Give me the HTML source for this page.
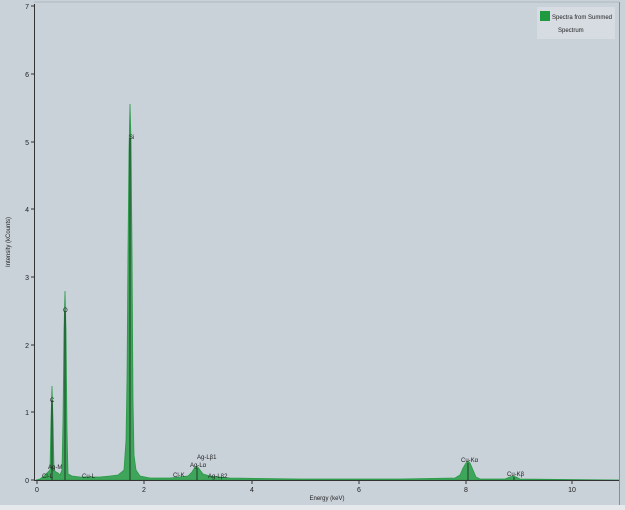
<!DOCTYPE html>
<html><head><style>
html,body{margin:0;padding:0;width:625px;height:510px;overflow:hidden;background:#c9d1d9;font-family:"Liberation Sans",sans-serif}
</style></head><body>
<svg width="625" height="510" xmlns="http://www.w3.org/2000/svg" font-family="Liberation Sans, sans-serif">
<rect x="0" y="0" width="625" height="510" fill="#c9d1d9"/>
<rect x="0" y="505" width="625" height="5" fill="#e6e9ec"/>
<line x1="619.5" y1="2" x2="619.5" y2="505" stroke="#8a9096" stroke-width="1"/>
<line x1="34" y1="2" x2="619" y2="2" stroke="#b0b8c0" stroke-width="1"/>
<path d="M36,480 L40,479 44,476 48,472 50,470 51,420 52,386 53,420 54,470 56,472 58,473 60,475 62,470 63,420 64,330 65,291 66,330 67,430 68,474 72,476 80,477 100,477 110,476 118,475 124,470 126,440 127,380 128,250 129,150 130,104 131,140 132,250 133,400 134,455 136,470 140,476 150,478 170,478 180,477 188,476 192,472 195,467 197,466 200,470 203,474 210,476 220,477 230,478 300,479 400,479 455,478 460,475 463,468 466,463 468,461 470,463 473,470 476,477 480,479 505,479 510,477 513,476 516,477 520,479 619,480 Z" fill="#3fa55a" stroke="#2a9a48" stroke-width="0.8"/>
<g stroke="#1e3a28" stroke-width="1">
<line x1="52" y1="400" x2="52" y2="480"/><line x1="65" y1="312" x2="65" y2="480"/><line x1="130" y1="138" x2="130" y2="480"/>
<line x1="197" y1="468" x2="197" y2="480"/><line x1="468" y1="463" x2="468" y2="480"/><line x1="514" y1="477" x2="514" y2="480"/>
</g>
<line x1="34.5" y1="4" x2="34.5" y2="481" stroke="#333" stroke-width="1"/>
<line x1="34" y1="480.5" x2="619" y2="480.5" stroke="#333" stroke-width="1"/>
<g stroke="#333" stroke-width="1">
<line x1="31" y1="480" x2="34" y2="480"/><line x1="31" y1="412" x2="34" y2="412"/><line x1="31" y1="345" x2="34" y2="345"/><line x1="31" y1="277" x2="34" y2="277"/><line x1="31" y1="209" x2="34" y2="209"/><line x1="31" y1="142" x2="34" y2="142"/><line x1="31" y1="74" x2="34" y2="74"/><line x1="31" y1="6" x2="34" y2="6"/>
<line x1="37" y1="481" x2="37" y2="484"/><line x1="144" y1="481" x2="144" y2="484"/><line x1="252" y1="481" x2="252" y2="484"/><line x1="359" y1="481" x2="359" y2="484"/><line x1="466" y1="481" x2="466" y2="484"/><line x1="572" y1="481" x2="572" y2="484"/>
</g>
<g font-size="7" fill="#222" text-anchor="end">
<text x="29" y="483">0</text><text x="29" y="415">1</text><text x="29" y="348">2</text><text x="29" y="280">3</text><text x="29" y="212">4</text><text x="29" y="145">5</text><text x="29" y="77">6</text><text x="29" y="9">7</text>
</g>
<g font-size="7" fill="#222" text-anchor="middle">
<text x="37" y="492">0</text><text x="144" y="492">2</text><text x="252" y="492">4</text><text x="359" y="492">6</text><text x="466" y="492">8</text><text x="572" y="492">10</text>
<text x="327" y="500" font-size="6">Energy (keV)</text>
</g>
<text transform="translate(10,242) rotate(-90)" font-size="6" fill="#222" text-anchor="middle">Intensity (kCounts)</text>
<g font-size="6" fill="#222">
<text x="129" y="139">Si</text><text x="63" y="312">O</text><text x="50" y="402">C</text>
<text x="48" y="469">Ag-M</text><text x="42" y="478">Cl-L</text><text x="82" y="478">Cu-L</text>
<text x="173" y="477">Cl-K</text><text x="197" y="459">Ag-Lβ1</text><text x="190" y="467">Ag-Lα</text><text x="208" y="478">Ag-Lβ2</text>
<text x="461" y="462">Cu-Kα</text><text x="507" y="476">Cu-Kβ</text>
</g>
<rect x="537" y="7" width="78" height="32" fill="#d6dce2"/>
<rect x="540" y="11" width="10" height="10" fill="#1f9a3f"/>
<g font-size="6" fill="#222"><text x="552" y="19">Spectra from Summed</text><text x="558" y="32">Spectrum</text></g>
</svg>
</body></html>
